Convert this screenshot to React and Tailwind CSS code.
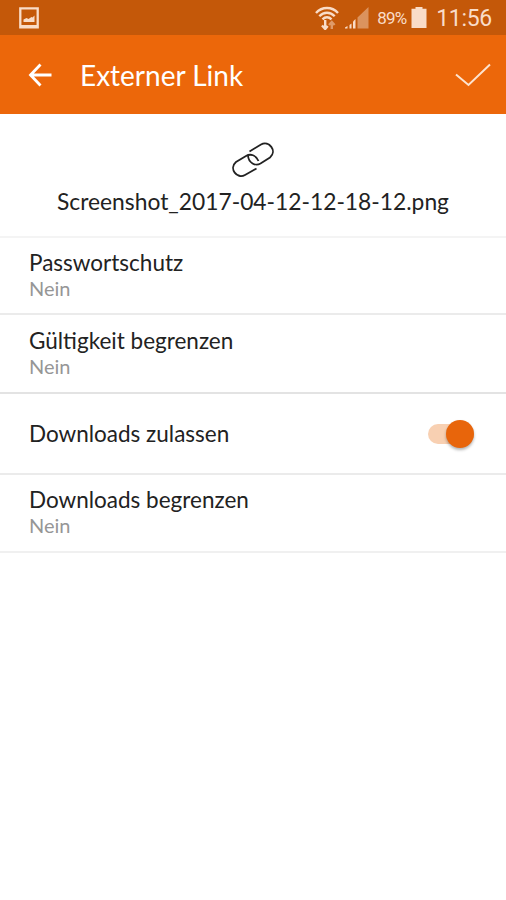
import { useState } from 'react'

const SignalIcon = () => (
  <svg className="w-6 h-6" viewBox="0 0 24 24" fill="#f9dcc8">
    <path d="M12.500 11.500L23.500 1V22.500H12.500z" opacity="0.45" />
    <path d="M8 15.500L10.500 13V22.500H8z" />
    <path d="M4.500 19l2-1.500v5h-2zM0 21.500l2.500-1.500v2.500H0z" />
  </svg>
)

const WifiIcon = () => (
  <svg className="w-6 h-6" viewBox="0 0 24 24" fill="none" stroke="#f9dcc8" strokeWidth="2.400">
    <path d="M1 7C7 .3 17 .3 23 7M4.300 10.300c4.500-4.800 10.900-4.800 15.400 0M7.500 13.400c2.700-2.800 6.300-2.800 9 0" />
    <path d="M10.200 14v8.500M7 19.500l3.200 3.500 2.500-3" />
    <path d="M16.800 23v-7M14 19l2.800-3 2.800 3" opacity="0.5" />
  </svg>
)

function StatusBar() {
  return (
    <div className="flex h-[35px] shrink-0 items-center justify-between bg-[#c45809] pl-[19px] pr-[14px] text-[#f9dcc8] font-[Roboto,sans-serif]">
      <svg className="w-5 h-[22px]" viewBox="0 0 20 22" fill="none">
        <path d="M1.300 1.300h17.400v19H1.300z" stroke="#f9dcc8" strokeWidth="2.300" />
        <path d="M4.500 15v-2.500l3-1.500 2 1 3-2 1 .5 2-2V15z" fill="#f9dcc8" />
        <path d="M1 18h18v3H1z" fill="#f9dcc8" />
      </svg>
      <div className="flex items-center">
        <WifiIcon />
        <div className="ml-1.5">
          <SignalIcon />
        </div>
        <span className="ml-2 mt-0.5 w-[31px] whitespace-nowrap text-[17px] tracking-[-0.8px]">89%</span>
        <svg className="ml-[3px] mr-px h-[21px] w-4" viewBox="0 0 16 21" fill="#f9dcc8">
          <path d="M4.500 0h7v1.800h4V21H.5V1.800h4z" />
        </svg>
        <span className="ml-2 mt-[3px] whitespace-nowrap text-[23px] tracking-[-0.3px]">11:56</span>
      </div>
    </div>
  )
}

function Header() {
  return (
    <header className="flex h-[79px] shrink-0 items-center bg-[#ec670a] pl-7 pr-[15px] text-white">
      <svg className="h-6 w-6" viewBox="0 0 24 24" fill="none" stroke="currentColor" strokeWidth="2.800">
        <path d="M12.500 1.500L2.500 12l10 10.500M2.500 12H23.500" />
      </svg>
      <h1 className="ml-7 flex-1 text-[28px] leading-8">Externer Link</h1>
      <svg className="h-6 w-9" viewBox="0 0 36 24" fill="none" stroke="#fde3cf" strokeWidth="2">
        <path d="M1 11.500L13.500 22L35 1.500" />
      </svg>
    </header>
  )
}

function Row({ title, value }) {
  return (
    <>
      <p className="text-[22.5px] leading-7 text-[#222]">{title}</p>
      <p className="-mt-px text-[20px] leading-6 text-[#969696]">{value}</p>
    </>
  )
}

export default function App() {
  const [allowDownloads, setAllowDownloads] = useState(true)

  return (
    <div className="flex h-[900px] w-full flex-col overflow-hidden bg-white font-[Lato,sans-serif]">
      <StatusBar />
      <Header />

      {/* Shared file */}
      <div className="flex h-[124px] shrink-0 flex-col items-center border-b-2 border-[#f4f4f4] pt-[27px]">
        <svg className="h-[38px] w-[42px]" viewBox="0 0 42 38" fill="none" stroke="#222" strokeWidth="1.800">
          <path d="M17.500 10.500L29 3.500C37-1 45.500 10 38 16.500L28.500 22.500C23.500 25.500 16.500 22 16 14.500" />
          <path d="M24.500 27.500L13 34C5 38.500-3.500 27.500 4 21L14 15C18.500 12.300 24 14 26.500 20" />
        </svg>
        <p className="mt-2 text-[22.8px] leading-7 text-[#222]">Screenshot_2017-04-12-12-18-12.png</p>
      </div>

      {/* Link options */}
      <div className="h-[77px] shrink-0 border-b-2 border-[#ebebeb] px-[29px] pt-[11px]">
        <Row title="Passwortschutz" value="Nein" />
      </div>
      <div className="h-[79px] shrink-0 border-b-2 border-[#e3e3e3] px-[29px] pt-3">
        <Row title="Gültigkeit begrenzen" value="Nein" />
      </div>
      <div className="flex h-[81px] shrink-0 items-center justify-between border-b-2 border-[#ebebeb] pl-[29px] pr-8">
        <span className="text-[22.5px] leading-7 text-[#222]">Downloads zulassen</span>
        <button
          onClick={() => setAllowDownloads(!allowDownloads)}
          className={`flex h-5 w-[46px] items-center rounded-full ${
            allowDownloads ? 'justify-end bg-[#f8d0b2]' : 'bg-gray-300'
          }`}
        >
          <span className="h-7 w-7 shrink-0 rounded-full bg-[#e8650b] shadow-[0_2px_3px_rgba(0,0,0,0.3)]"></span>
        </button>
      </div>
      <div className="h-[78px] shrink-0 border-b-2 border-[#f0f0f0] px-[29px] pt-[11px]">
        <Row title="Downloads begrenzen" value="Nein" />
      </div>
    </div>
  )
}
